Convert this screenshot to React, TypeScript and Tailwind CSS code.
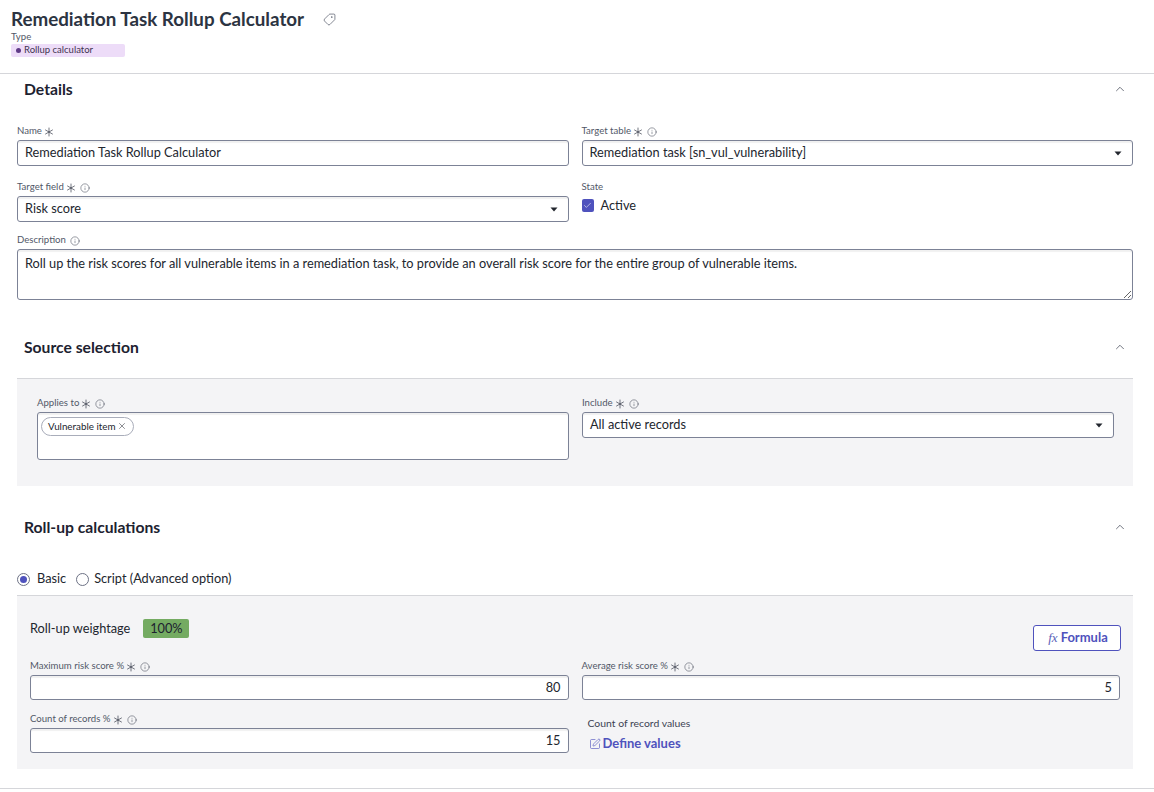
import React from 'react';
import { Asterisk, Check, ChevronUp, Info, SquarePen, Tag, X } from 'lucide-react';

const inputBox = 'w-full bg-white border border-[#7c8296] rounded-[3px] shadow-[inset_0_2px_1px_rgba(0,0,0,0.06)] text-[12.75px] text-[#22262e]';

const Label = ({ text, req, info }: { text: string; req?: boolean; info?: boolean }) => (
  <div className="h-[18px] pt-px flex items-center text-[9.6px] text-[#525868]">
    <span>{text}</span>
    {req && <Asterisk size={16} strokeWidth={1} className="ml-[-1px] mr-[-3px] text-[#2c3140]" />}
    {info && <Info size={10} strokeWidth={1.25} className="ml-[4px] text-[#3c4252]" />}
  </div>
);

const Caret = () => (
  <svg width="8" height="5" viewBox="0 0 8 5" className="shrink-0">
    <path d="M0.5 0.5h7L4 4.5z" fill="#22262e" />
  </svg>
);

const SelectField = ({ label, value, info }: { label: string; value: string; info?: boolean }) => (
  <div>
    <Label text={label} req info={info} />
    <div className={`${inputBox} h-[26px] flex items-center justify-between pl-[7px] pr-[10px]`}>
      <span>{value}</span>
      <Caret />
    </div>
  </div>
);

const NumberField = ({ label, value }: { label: string; value: string }) => (
  <div>
    <Label text={label} req info />
    <div className={`${inputBox} h-[25px] flex items-center justify-end pr-[7px]`}>{value}</div>
  </div>
);

const SectionHead = ({ title }: { title: string }) => (
  <div className="h-[30px] flex items-center justify-between pl-[24px] pr-[27px]">
    <h2 className="pt-[2px] text-[15.7px] font-bold text-[#1d2230]">{title}</h2>
    <ChevronUp size={14} strokeWidth={1.25} className="text-[#3c4252]" />
  </div>
);

export default function App() {
  return (
    <div className="min-h-screen bg-white font-['Lato',sans-serif] text-[#22262e]">
      {/* Header */}
      <header className="h-[74px] border-b border-[#d5d6da] pl-[11px] pt-[7px]">
        <div className="flex items-center h-[24px]">
          <h1 className="text-[18.75px] font-bold text-[#2c3442] leading-none">Remediation Task Rollup Calculator</h1>
          <Tag size={13} strokeWidth={1.25} className="ml-[19px] -scale-x-100 text-[#4a5060]" />
        </div>
        <div className="text-[9.6px] text-[#525868] leading-[12px]">Type</div>
        <div className="w-[114px] h-[13px] bg-[#eddcf8] rounded-[2px] flex items-center pl-[5px] text-[9.5px] text-[#3f3350] mt-[1px]">
          <span className="w-[5px] h-[5px] rounded-full bg-[#5f3a87] mr-[3px]" />
          Rollup calculator
        </div>
      </header>

      {/* Details */}
      <SectionHead title="Details" />
      <div className="px-[17px] pt-[18px] pr-[21px]">
        <div className="grid grid-cols-2 gap-x-[13px] gap-y-[12px]">
          <div>
            <Label text="Name" req />
            <div className={`${inputBox} h-[26px] flex items-center pl-[7px]`}>Remediation Task Rollup Calculator</div>
          </div>
          <SelectField label="Target table" value="Remediation task [sn_vul_vulnerability]" info />
          <SelectField label="Target field" value="Risk score" info />
          <div>
            <Label text="State" />
            <div className="flex items-center h-[19px] text-[12.75px]">
              <span className="w-[12px] h-[13px] rounded-[2px] bg-[#4f52bd] flex items-center justify-center mr-[7px]">
                <Check size={9} strokeWidth={1.5} className="text-white" />
              </span>
              Active
            </div>
          </div>
        </div>
        <div className="mt-[9px]">
          <Label text="Description" info />
          <textarea
            readOnly
            value="Roll up the risk scores for all vulnerable items in a remediation task, to provide an overall risk score for the entire group of vulnerable items."
            className={`${inputBox} h-[51px] block px-[7px] py-[4px] leading-[18px] outline-none`}
          />
        </div>
      </div>

      {/* Source selection */}
      <div className="mt-[32px]">
        <SectionHead title="Source selection" />
      </div>
      <div className="ml-[17px] mr-[21px] mt-[16px] bg-[#f4f4f6] border-t border-[#d5d6da] pl-[20px] pr-[19px] pt-[15px] pb-[26px]">
        <div className="grid grid-cols-2 gap-x-[13px]">
          <div>
            <Label text="Applies to" req info />
            <div className={`${inputBox} h-[48px] pl-[3px] pt-[3px]`}>
              <span className="inline-flex items-center h-[19px] pl-[6px] pr-[6px] border border-[#a9adba] rounded-full text-[9.8px] bg-white">
                Vulnerable item
                <X size={10} strokeWidth={1.25} className="ml-[2px]" />
              </span>
            </div>
          </div>
          <SelectField label="Include" value="All active records" info />
        </div>
      </div>

      {/* Roll-up calculations */}
      <div className="mt-[26px]">
        <SectionHead title="Roll-up calculations" />
      </div>
      <div className="mt-[27px] ml-[17px] h-[20px] flex items-center text-[12.75px]">
        <span className="w-[13px] h-[13px] rounded-full border border-[#6d7285] bg-white flex items-center justify-center mr-[7px]">
          <span className="w-[7px] h-[7px] rounded-full bg-[#4f52bd]" />
        </span>
        Basic
        <span className="w-[13px] h-[13px] rounded-full border border-[#6d7285] bg-white ml-[10px] mr-[5px]" />
        Script (Advanced option)
      </div>
      <div className="ml-[17px] mr-[21px] mt-[6px] bg-[#f4f4f6] border-t border-[#d5d6da] px-[13px] pt-[23px] pb-[16px]">
        <div className="h-[38px] flex items-start justify-between">
          <div className="flex items-center h-[19px] text-[12.75px]">
            Roll-up weightage
            <span className="ml-[13px] w-[46px] h-[19px] rounded-[2px] bg-[#74ab62] flex items-center justify-center text-[#1d2230]">100%</span>
          </div>
          <button className="mt-[6px] w-[88px] h-[26px] mr-[-1px] pl-[2px] border border-[#4f52bd] rounded-[3px] bg-white flex items-center justify-center text-[13px] font-bold text-[#4f52bd]">
            <span className="font-['Liberation_Serif',serif] italic font-normal text-[13px] mr-[3px] text-[#5a5fb8]">fx</span>
            Formula
          </button>
        </div>
        <div className="grid grid-cols-2 gap-x-[13px] gap-y-[10px]">
          <NumberField label="Maximum risk score %" value="80" />
          <NumberField label="Average risk score %" value="5" />
          <NumberField label="Count of records %" value="15" />
          <div className="pl-[6px] pt-[4px]">
            <div className="text-[10.4px] leading-[18px] text-[#3c4252]">Count of record values</div>
            <div className="flex items-center h-[19px] mt-[2px] text-[13px] font-bold text-[#4f52bd]">
              <SquarePen size={12} strokeWidth={1.25} className="ml-[1px] mr-[2px]" />
              Define values
            </div>
          </div>
        </div>
      </div>
      <div className="mt-[19px] border-t border-[#d5d6da]" />
    </div>
  );
}
